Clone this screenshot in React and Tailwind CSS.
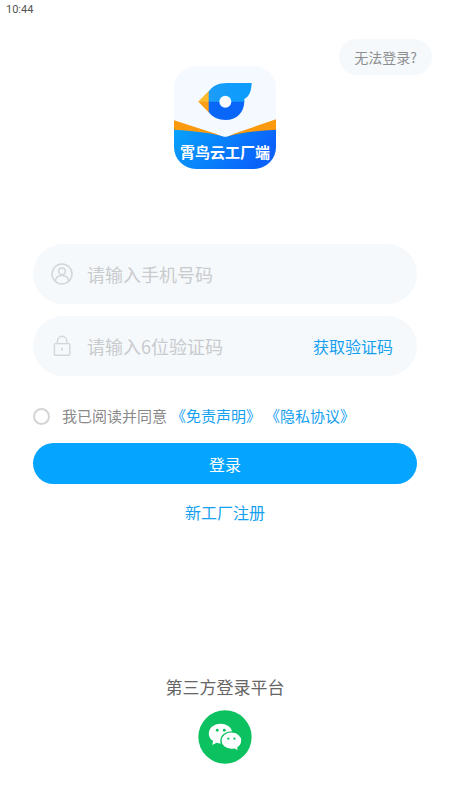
import React from "react";

function Logo() {
  return (
    <div className="relative flex h-[103px] w-[102px] items-end justify-center self-center overflow-hidden rounded-[22px] pb-[6px]">
      <svg className="absolute inset-0 h-full w-full" viewBox="27 25 306 309" preserveAspectRatio="none" aria-hidden="true">
        <defs>
          <linearGradient id="base" x1="0" y1="0" x2="1" y2="0.3">
            <stop offset="0" stopColor="#08a2fb" />
            <stop offset="1" stopColor="#0a62fb" />
          </linearGradient>
          <linearGradient id="wing" x1="0" y1="0" x2="1" y2="0">
            <stop offset="0" stopColor="#1c9cf8" />
            <stop offset="1" stopColor="#0a9cfd" />
          </linearGradient>
        </defs>
        <rect x="27" y="25" width="306" height="309" fill="#f4faff" />
        <path d="M27 188 L180 237 L333 185 V260 H27 Z" fill="#fb9a0c" />
        <path d="M150 227 Q180 236 210 227 L180 240 Z" fill="#f4faff" />
        <path d="M27 216 Q130 222 172 236 Q181 239 190 236 Q235 221 333 216 V334 H27 Z" fill="url(#base)" />
        <path d="M100 132 L132 100 V165 Z" fill="#fb9f16" />
        <path d="M100 132 L132 100 V132 Z" fill="#fcbc2c" />
        <path d="M131 130 H238 C238 166 213 187 182 187 C160 187 142 179 131 163 Z" fill="#0866f8" />
        <path d="M131 132 V102 C141 85 160 76 186 76 H260 C259 99 254 116 238 124 V132 Z" fill="url(#wing)" />
        <circle cx="181" cy="132" r="18" fill="#f8fcff" />
      </svg>
      <span className="relative text-[15px] leading-[22px] font-bold whitespace-nowrap text-white">霄鸟云工厂端</span>
    </div>
  );
}

function UserIcon() {
  return (
    <svg className="h-6 w-6 shrink-0" viewBox="0 0 24 24" fill="none" stroke="#d3d6d9" strokeWidth="1.5" aria-hidden="true">
      <circle cx="12" cy="12" r="10" />
      <circle cx="12" cy="9.3" r="3.3" />
      <path d="M5.4 19.2C5.8 15.3 8.3 13.6 12 13.6s6.2 1.7 6.6 5.6" />
    </svg>
  );
}

function LockIcon() {
  return (
    <svg className="h-6 w-6 shrink-0" viewBox="0 0 24 24" fill="none" stroke="#d3d6d9" strokeWidth="1.4" strokeLinejoin="round" aria-hidden="true">
      <rect x="4.4" y="9.6" width="15.4" height="11.6" rx="1" />
      <path d="M7.4 9.6V7a4.7 4.7 0 0 1 9.4 0v2.6" />
      <path d="M12.1 14.2v2.2" strokeLinecap="round" />
    </svg>
  );
}

function WechatIcon() {
  return (
    <svg className="h-[54px] w-[54px]" viewBox="115 122 160 160" aria-hidden="true">
      <circle cx="195" cy="202" r="79" fill="#0cc160" />
      <path d="M182 163c-20 0-35 13-35 29 0 9 5 17 13 22l-3 12 13-7c4 1 8 2 12 2 20 0 35-13 35-29s-15-29-35-29z" fill="#fff" />
      <circle cx="172" cy="182" r="4.2" fill="#0cc160" />
      <circle cx="193" cy="182" r="4.2" fill="#0cc160" />
      <path d="M214 187c-18 0-31 12-31 26s13 26 31 26c4 0 7 0 10-1l11 7-2-11c7-5 12-12 12-21 0-14-13-26-31-26z" fill="#fff" stroke="#0cc160" strokeWidth="4" />
      <circle cx="205" cy="207" r="3.4" fill="#0cc160" />
      <circle cx="223" cy="207" r="3.4" fill="#0cc160" />
    </svg>
  );
}

const inputStyle =
  "h-full min-w-0 flex-1 bg-transparent text-[18px] text-[#555] outline-none placeholder:text-[#c9cbcd]";

export default function App() {
  return (
    <div className="flex min-h-screen flex-col bg-white font-['Noto_Sans_CJK_SC',sans-serif]">
      <header className="flex h-[39px] px-[6px] pt-[2px]">
        <time className="font-['Roboto',sans-serif] text-[11px] leading-4 text-[#555]">10:44</time>
      </header>
      <div className="flex justify-end px-[18px]">
        <button type="button" className="h-9 rounded-full bg-[#f5f9fc] px-[15px] text-[14px] text-[#8c8e90]">
          无法登录?
        </button>
      </div>

      <main className="-mt-[9px] flex flex-1 flex-col px-[33px]">
        <Logo />
        <form className="mt-[75px] flex flex-col" onSubmit={(e) => e.preventDefault()}>
          <div className="flex h-[60px] items-center gap-[13px] rounded-full bg-[#f5f9fc] pr-6 pl-[17px]">
            <UserIcon />
            <input type="tel" aria-label="手机号码" placeholder="请输入手机号码" className={inputStyle} />
          </div>
          <div className="mt-3 flex h-[60px] items-center gap-[13px] rounded-full bg-[#f5f9fc] pr-6 pl-[17px]">
            <LockIcon />
            <input type="text" inputMode="numeric" aria-label="验证码" placeholder="请输入6位验证码" className={inputStyle} />
            <button type="button" className="shrink-0 text-[16px] text-[#159ff0]">获取验证码</button>
          </div>

          <div className="mt-7 flex h-6 items-center text-[15px] leading-6">
            <input id="agree" type="checkbox" className="h-[17px] w-[17px] shrink-0 appearance-none rounded-full border-2 border-[#d4d4d4] checked:border-[#05a4ff] checked:bg-[#05a4ff]" />
            <div className="flex gap-1 pl-3 whitespace-nowrap">
              <label htmlFor="agree" className="text-[#8a8a8a]">我已阅读并同意</label>
              <a href="#disclaimer" className="text-[#159ff0]">《免责声明》</a>
              <a href="#privacy" className="text-[#159ff0]">《隐私协议》</a>
            </div>
          </div>

          <button type="submit" className="mt-[15px] h-[41px] rounded-full bg-[#05a4ff] text-[16px] text-white">登录</button>
        </form>
        <a href="#register" className="mt-4 self-center text-[16px] leading-6 text-[#159ff0]">新工厂注册</a>

        <section className="mt-auto flex flex-col items-center gap-[11px] pb-9">
          <h2 className="text-[17px] leading-6 text-[#666]">第三方登录平台</h2>
          <button type="button" aria-label="微信登录" className="h-[54px] w-[54px] rounded-full">
            <WechatIcon />
          </button>
        </section>
      </main>
    </div>
  );
}
